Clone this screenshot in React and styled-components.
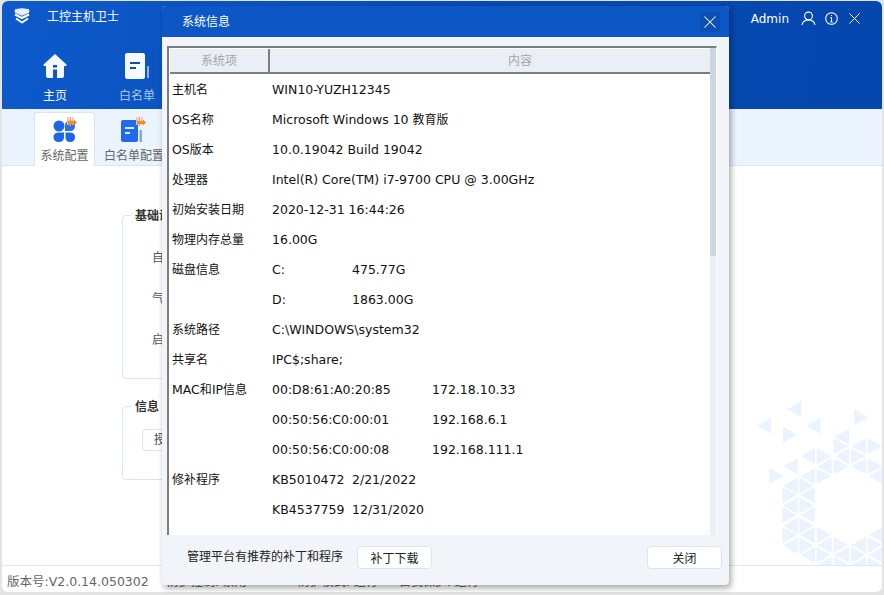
import React from "react"
import styled, { createGlobalStyle } from "styled-components"

const GlobalStyle = createGlobalStyle`
  html, body {
    margin: 0;
    padding: 0;
    height: 100%;
    background: #e4e4e4;
    overflow: hidden;
  }
  #root {
    height: 100%;
  }
  * {
    box-sizing: border-box;
  }
`

const FONT = `"DejaVu Sans", "Noto Sans CJK SC", sans-serif`

const Page = styled.div`
  height: 595px;
  padding: 1px 2px 3px 2px;
  position: relative;
  font-family: ${FONT};
  font-size: 12px;
`

const AppWindow = styled.div`
  height: 100%;
  display: flex;
  flex-direction: column;
  background: #fff;
  border-radius: 6px;
  overflow: hidden;
`

const Header = styled.header`
  height: 108px;
  flex: none;
  background: linear-gradient(100deg, #0e5acb 0%, #0549b0 60%, #0547ae 100%);
  color: #fff;
`

const TopBar = styled.div`
  height: 34px;
  display: flex;
  align-items: center;
  padding: 0 20px 5px 12px;
`

const AppTitle = styled.span`
  margin-left: 17px;
  font-size: 12px;
`

const UserArea = styled.div`
  margin-left: auto;
  margin-top: 6px;
  display: flex;
  align-items: center;
  gap: 8px;
`

const AdminName = styled.span`
  font-size: 12px;
  margin-right: 4px;
`

const WindowClose = styled.span`
  width: 15px;
  display: flex;
  justify-content: center;
`

const NavRow = styled.nav`
  display: flex;
  padding: 15px 0 0 12px;
`

const NavItem = styled.div`
  width: 82px;
  display: flex;
  flex-direction: column;
  align-items: center;
  gap: 7px;
  padding-top: 3px;
  color: ${(p) => (p.$active ? "#fff" : "#a9c6f0")};
`

const TabStrip = styled.div`
  height: 57px;
  flex: none;
  display: flex;
  gap: 8px;
  align-items: flex-end;
  padding-left: 32px;
  background: #eaf3fe;
  border-bottom: 1px solid #dbe6f2;
`

const Tab = styled.div`
  width: ${(p) => p.$width}px;
  height: 54px;
  margin-bottom: -1px;
  display: flex;
  flex-direction: column;
  align-items: center;
  padding-top: 4px;
  gap: 3px;
  color: #666;
  white-space: nowrap;
  background: ${(p) => (p.$active ? "#fff" : "transparent")};
  border: 1px solid ${(p) => (p.$active ? "#d8e5f3" : "transparent")};
  border-bottom: none;
  border-radius: 4px 4px 0 0;
`

const Content = styled.main`
  flex: 1;
  position: relative;
  overflow: hidden;
  padding: 49px 0 0 120px;
`

const Watermark = styled.svg`
  position: absolute;
  left: 738px;
  top: 223px;
  fill: #eaf3fe;
`

const GroupBox = styled.section`
  width: 560px;
  height: ${(p) => p.$height}px;
  margin-bottom: ${(p) => p.$gap}px;
  position: relative;
  border: 1px solid #d8e5f3;
  border-radius: 4px;
  padding: ${(p) => p.$pad}px 0 0 19px;
`

const Legend = styled.h4`
  position: absolute;
  left: 8px;
  top: -8px;
  margin: 0;
  padding: 0 4px;
  background: #fff;
  font-size: 12px;
  line-height: 17px;
  font-weight: bold;
  color: #333;
`

const FieldLine = styled.div`
  height: 41px;
  padding-left: 10px;
  color: #555;
  line-height: 17px;
`

const SmallButton = styled.div`
  width: 100px;
  height: 22px;
  padding-left: 11px;
  line-height: 20px;
  border: 1px solid #d8e5f3;
  border-radius: 4px;
  color: #444;
`

const StatusBar = styled.footer`
  height: 27px;
  flex: none;
  display: flex;
  align-items: center;
  padding: 3px 0 0 5px;
  border-top: 1px solid #e3e6ea;
  color: #666;
`

const Version = styled.span`
  width: 160px;
  font-size: 12.5px;
`

const StatusText = styled.span`
  width: ${(p) => p.$width}px;
  font-size: 12px;
  color: #555;
`

const Dialog = styled.div`
  position: absolute;
  left: 162px;
  top: 6px;
  width: 567px;
  height: 579px;
  display: flex;
  flex-direction: column;
  background: #f1f5f9;
  border-radius: 4px;
  box-shadow: 2px 3px 6px rgba(0, 0, 0, 0.35);
  overflow: hidden;
`

const DialogHeader = styled.div`
  height: 31px;
  flex: none;
  display: flex;
  align-items: center;
  justify-content: space-between;
  padding: 0 9px 3px 20px;
  color: #fff;
  background: #0c57c5;
`

const DialogClose = styled.div`
  width: 20px;
  height: 20px;
  margin-top: 3px;
  display: flex;
  align-items: center;
  justify-content: center;
  background: #0a4eb6;
`

const DialogBody = styled.div`
  flex: 1;
  min-height: 0;
  padding: 9px 12px 0 5px;
`

const Frame = styled.div`
  height: 100%;
  display: flex;
  border-top: 2px solid #7d7d7d;
  border-left: 2px solid #7d7d7d;
  background: #fff;
  border-right: 1px solid #fff;
`

const TableArea = styled.div`
  flex: 1;
  min-width: 0;
  overflow: hidden;
  padding: 1px 0 0 1px;
`

const TableHead = styled.div`
  height: 25px;
  display: flex;
  background: #eaeff6;
  border-bottom: 2px solid #7d7d7d;
  color: #a5a5a5;
  line-height: 24px;
  text-align: center;
`

const HeadCell = styled.div`
  width: ${(p) => p.$width}px;
  flex: ${(p) => (p.$width ? "none" : 1)};
  padding-left: ${(p) => (p.$width ? 0 : 60)}px;
  border-right: ${(p) => (p.$width ? "2px solid #7d7d7d" : "none")};
`

const Row = styled.div`
  height: 30px;
  display: flex;
  align-items: center;
  padding: 2px 0 0 2px;
  color: #111;
`

const Cell = styled.div`
  width: ${(p) => p.$width}px;
  flex: none;
  line-height: 17px;
  white-space: nowrap;
`

const Latin = styled.span`
  font-size: 12.5px;
  line-height: 17px;
`

const Scrollbar = styled.div`
  width: 6px;
  flex: none;
  background: repeating-conic-gradient(#dfe6ee 0% 25%, #f8fafc 0% 50%) 0 0 / 2px 2px;
`

const ScrollThumb = styled.div`
  height: 208px;
  background: #ccd7e3;
`

const DialogFooter = styled.div`
  height: 50px;
  flex: none;
  display: flex;
  align-items: center;
  padding: 0 7px 5px 25px;
  color: #222;
`

const FooterNote = styled.span`
  margin-bottom: 5px;
`

const Button = styled.div`
  width: ${(p) => p.$width}px;
  height: 23px;
  margin-left: ${(p) => p.$left || 0}px;
  display: flex;
  align-items: center;
  justify-content: center;
  background: #fff;
  border: 1px solid #d8e5f3;
  border-radius: 4px;
  color: #222;
`

const LogoIcon = () => (
  <svg width="16" height="16" viewBox="0 0 16 16" fill="none" stroke="#fff" strokeLinejoin="round">
    <path d="M1 1.5 L8 0.5 L15 1.5 V4.5 L8 7.5 L1 4.5 Z" fill="#e8f0fc" strokeWidth="0.5" />
    <path d="M1 6.5 L8 10 L15 6.5" strokeWidth="2" />
    <path d="M2 10.5 L8 14.5 L14 10.5" strokeWidth="2" />
  </svg>
)

const HomeIcon = () => (
  <svg width="26" height="26" viewBox="0 0 26 26">
    <path
      fill="#f4f8ff"
      d="M13 1 L24.5 11.5 Q25 13 23.4 13 H22 V23 Q22 25 20 25 H15 V16.5 H11 V25 H6 Q4 25 4 23 V13 H2.6 Q1 13 1.5 11.5 Z"
    />
    <rect x="11" y="12" width="4" height="2.5" fill="#0b50b8" />
  </svg>
)

const DocIcon = ({ body = "#f4f8ff", line = "#0b50b8", side = "#8fb4ea", w = 25, h = 26 }) => (
  <svg width={w} height={h} viewBox="0 0 25 26">
    <rect x="0" y="0" width="20" height="26" rx="2" fill={body} />
    <rect x="5" y="9" width="10" height="2" fill={line} />
    <rect x="5" y="14" width="6" height="2" fill={line} />
    <rect x="22" y="13" width="2" height="12" fill={side} />
  </svg>
)

const Flame = ({ x, y }) => (
  <g transform={`translate(${x} ${y})`}>
    <rect x="0" y="0" width="1.5" height="8" fill="#f7c08a" />
    <rect x="2.5" y="0" width="1.5" height="9" fill="#f4a55e" />
    <rect x="5" y="0" width="1.5" height="8" fill="#f7c08a" />
    <path d="M1 4 H7 V2.5 L10 5.5 L7 8.5 V7 H1 Z" fill="#f28a2e" />
  </g>
)

const FlowerIcon = () => (
  <svg width="26" height="26" viewBox="0 0 26 26">
    <circle cx="7" cy="9" r="5.5" fill="#1c66e8" />
    <path d="M13 9 Q13 3.5 18 3.5 Q23 3.5 23 9 Q23 14 18 14 H13 Z" fill="#2f6fe0" />
    <path d="M1.5 20 Q1.5 15.5 7 15.5 H12 V20 Q12 25 7 25 Q1.5 25 1.5 20 Z" fill="#1c66e8" />
    <path d="M13.5 15.5 H18 Q23 15.5 23 20 Q23 25 18 25 Q13.5 25 13.5 20 Z" fill="#1c66e8" />
    <Flame x={15} y={0} />
  </svg>
)

const DocTabIcon = () => (
  <svg width="26" height="26" viewBox="0 0 26 26">
    <rect x="0" y="3" width="17" height="22" rx="2" fill="#1f6bec" />
    <rect x="4" y="10" width="9" height="2" fill="#dbe8fd" />
    <rect x="4" y="15" width="5" height="2" fill="#dbe8fd" />
    <rect x="18.5" y="13" width="2.5" height="12" fill="#7fa9ef" />
    <Flame x={15} y={0} />
  </svg>
)

const UserIcon = () => (
  <svg width="15" height="15" viewBox="0 0 15 15" fill="none" stroke="#fff" strokeWidth="1.1">
    <circle cx="7.5" cy="5" r="3.9" />
    <path d="M1 14 Q2 9 7.5 9 Q13 9 14 14" />
  </svg>
)

const InfoIcon = () => (
  <svg width="15" height="15" viewBox="0 0 15 15" fill="none" stroke="#fff" strokeWidth="1.1">
    <circle cx="7.5" cy="7.5" r="5.8" />
    <path d="M7.5 6.5 V11 M6.3 6.5 H7.5 M6.3 11 H8.8 M7.5 4 V5" />
  </svg>
)

const CloseIcon = ({ size = 12 }) => (
  <svg width={size} height={size} viewBox="0 0 12 12" fill="none" stroke="#fff" strokeWidth="1.05">
    <path d="M0.5 0.5 L11.5 11.5 M11.5 0.5 L0.5 11.5" />
  </svg>
)

// triangles of the background mark: [direction, x of upright edge, y of centre]
const TRIANGLES = [
  ["L", 184, 61], ["L", 94, 110], ["L", 242, 110], ["R", 342, 85], ["R", 129, 137], ["R", 87, 261],
  ["L", 327, 143], ["R", 281, 172], ["L", 378, 172], ["R", 383, 172],
  ["L", 327, 202], ["R", 333, 202], ["L", 225, 202], ["R", 230, 202],
  ["L", 378, 232], ["R", 383, 232], ["R", 281, 232], ["L", 275, 232], ["L", 173, 232],
  ["L", 225, 262], ["R", 230, 262], ["L", 430, 262],
  ["L", 173, 290], ["R", 178, 290], ["R", 127, 318], ["L", 224, 318],
  ["L", 173, 350], ["R", 178, 350], ["R", 127, 378], ["L", 224, 378],
  ["L", 173, 410], ["R", 178, 410], ["R", 127, 438], ["L", 224, 438], ["R", 230, 438],
  ["L", 173, 470], ["R", 178, 470], ["L", 225, 498], ["R", 230, 498],
  ["L", 275, 468], ["R", 281, 468], ["L", 327, 498], ["R", 333, 498],
  ["L", 378, 468], ["R", 383, 468], ["L", 430, 438], ["L", 430, 498],
  ["L", 275, 528], ["R", 281, 528], ["L", 378, 528], ["R", 383, 528],
]

function TriangleMark() {
  return (
    <Watermark width="144" height="180" viewBox="0 0 432 540">
      {TRIANGLES.map(([dir, x, y]) => {
        const tip = dir === "L" ? x - 43 : x + 43
        return <polygon key={`${dir}${x}-${y}`} points={`${x},${y - 24} ${tip},${y} ${x},${y + 24}`} />
      })}
    </Watermark>
  )
}

const INFO_ROWS = [
  { label: "主机名", cells: [["WIN10-YUZH12345"]] },
  { label: "OS名称", cells: [["Microsoft Windows 10 ", "教育版"]] },
  { label: "OS版本", cells: [["10.0.19042 Build 19042"]] },
  { label: "处理器", cells: [["Intel(R) Core(TM) i7-9700 CPU @ 3.00GHz"]] },
  { label: "初始安装日期", cells: [["2020-12-31 16:44:26"]] },
  { label: "物理内存总量", cells: [["16.00G"]] },
  { label: "磁盘信息", widths: [80], cells: [["C:"], ["475.77G"]] },
  { label: "", widths: [80], cells: [["D:"], ["1863.00G"]] },
  { label: "系统路径", cells: [["C:\\WINDOWS\\system32"]] },
  { label: "共享名", cells: [["IPC$;share;"]] },
  { label: "MAC和IP信息", widths: [160], cells: [["00:D8:61:A0:20:85"], ["172.18.10.33"]] },
  { label: "", widths: [160], cells: [["00:50:56:C0:00:01"], ["192.168.6.1"]] },
  { label: "", widths: [160], cells: [["00:50:56:C0:00:08"], ["192.168.111.1"]] },
  { label: "修补程序", widths: [80], cells: [["KB5010472"], ["2/21/2022"]] },
  { label: "", widths: [80], cells: [["KB4537759"], ["12/31/2020"]] },
  { label: "", widths: [80], cells: [["KB4534170"], ["12/10/2019"]] },
]

function LabelText({ text }) {
  // latin parts run a little larger than the chinese parts
  const parts = text.split(/([A-Za-z]+)/).filter(Boolean)
  return parts.map((part, i) => (/^[A-Za-z]+$/.test(part) ? <Latin key={i}>{part}</Latin> : <span key={i}>{part}</span>))
}

function InfoRow({ row }) {
  return (
    <Row>
      <Cell $width={100}>
        <LabelText text={row.label} />
      </Cell>
      {row.cells.map(([latin, cjk], i) => (
        <Cell key={i} $width={row.widths && row.widths[i] ? row.widths[i] : 300}>
          <Latin>{latin}</Latin>
          {cjk}
        </Cell>
      ))}
    </Row>
  )
}

function SystemInfoDialog() {
  return (
    <Dialog>
      <DialogHeader>
        系统信息
        <DialogClose>
          <CloseIcon size={12} />
        </DialogClose>
      </DialogHeader>
      <DialogBody>
        <Frame>
          <TableArea>
            <TableHead>
              <HeadCell $width={100}>系统项</HeadCell>
              <HeadCell>内容</HeadCell>
            </TableHead>
            {INFO_ROWS.map((row, i) => (
              <InfoRow key={i} row={row} />
            ))}
          </TableArea>
          <Scrollbar>
            <ScrollThumb />
          </Scrollbar>
        </Frame>
      </DialogBody>
      <DialogFooter>
        <FooterNote>管理平台有推荐的补丁和程序</FooterNote>
        <Button $width={75} $left={14}>补丁下载</Button>
        <Button $width={75} $left={215}>关闭</Button>
      </DialogFooter>
    </Dialog>
  )
}

export default function App() {
  return (
    <Page>
      <GlobalStyle />
      <AppWindow>
        <Header>
          <TopBar>
            <LogoIcon />
            <AppTitle>工控主机卫士</AppTitle>
            <UserArea>
              <AdminName>Admin</AdminName>
              <UserIcon />
              <InfoIcon />
              <WindowClose>
                <CloseIcon size={11} />
              </WindowClose>
            </UserArea>
          </TopBar>
          <NavRow>
            <NavItem $active>
              <HomeIcon />
              主页
            </NavItem>
            <NavItem>
              <DocIcon />
              白名单
            </NavItem>
          </NavRow>
        </Header>
        <TabStrip>
          <Tab $active $width={61}>
            <FlowerIcon />
            系统配置
          </Tab>
          <Tab $width={62}>
            <DocTabIcon />
            白名单配置
          </Tab>
        </TabStrip>
        <Content>
          <TriangleMark />
          <GroupBox $height={164} $gap={27} $pad={34}>
            <Legend>基础设置</Legend>
            <FieldLine>自动更新</FieldLine>
            <FieldLine>气泡提示</FieldLine>
            <FieldLine>启动方式</FieldLine>
          </GroupBox>
          <GroupBox $height={74} $gap={0} $pad={22}>
            <Legend>信息</Legend>
            <SmallButton>授权信息</SmallButton>
          </GroupBox>
        </Content>
        <StatusBar>
          <Version>版本号:V2.0.14.050302</Version>
          <StatusText $width={131}>防护控制: 禁用</StatusText>
          <StatusText $width={101}>防护模式: 运行</StatusText>
          <StatusText $width={120}>自我保护: 运行</StatusText>
        </StatusBar>
      </AppWindow>
      <SystemInfoDialog />
    </Page>
  )
}
